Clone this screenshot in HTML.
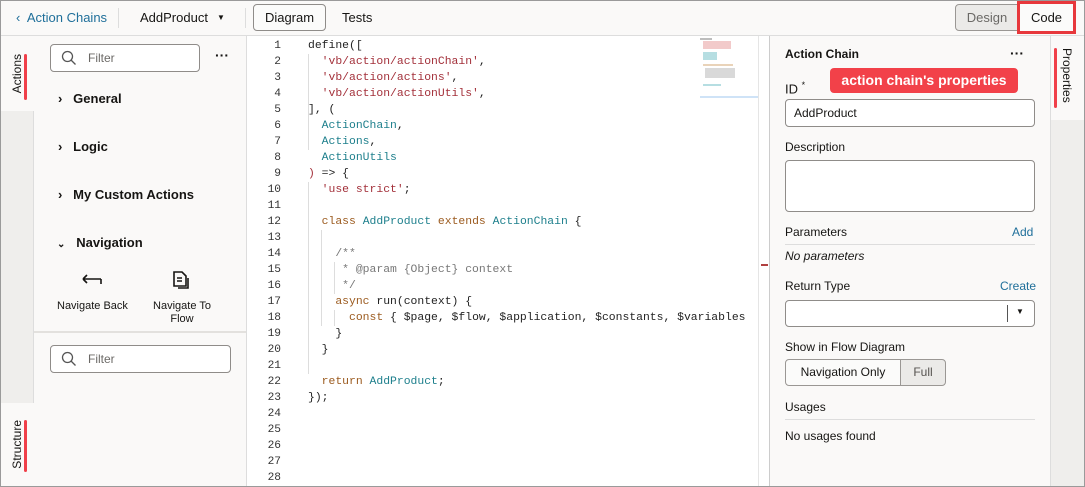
<!DOCTYPE html>
<html><head><meta charset="utf-8"><style>
*{box-sizing:border-box;margin:0;padding:0}
body{width:1085px;height:487px;overflow:hidden;background:#fff;font-family:"Liberation Sans",sans-serif;color:#161513;font-size:12px;position:relative}
.a{position:absolute}
.frame{left:0;top:0;width:1085px;height:487px;border:1px solid #9a9a9a;pointer-events:none;z-index:10}
.top{left:0;top:0;width:1085px;height:36px;background:#faf9f8;border-bottom:1px solid #ddd}
.code{font-family:"Liberation Mono",monospace;font-size:11.4px;line-height:16px;white-space:pre}
.ln{left:250px;width:31px;text-align:right;color:#333;font-size:11.2px}
.k{color:#9b5a1e}.t{color:#1d7f8c}.s{color:#a3303a}.c{color:#777}.p{color:#222}
.lbl{font-size:12px;color:#161513}
.inp{background:#fff;border:1px solid #8f8c89;border-radius:4px}
.vt{writing-mode:vertical-rl;font-size:12px}
</style></head><body>
<div class="a top"></div>
<div class="a" style="left:16px;top:10px;color:#1f6f9a;font-size:13px">‹&nbsp; Action Chains</div>
<div class="a" style="left:118px;top:8px;width:1px;height:20px;background:#ddd"></div>
<div class="a" style="left:140px;top:10px;font-size:13px">AddProduct</div>
<div class="a" style="left:217px;top:13px;font-size:8px">▼</div>
<div class="a" style="left:245px;top:8px;width:1px;height:20px;background:#ddd"></div>
<div class="a" style="left:253px;top:4px;width:73px;height:27px;border:1px solid #8f8c89;border-radius:4px;background:#fbfbfa;font-size:13px;text-align:center;line-height:25px">Diagram</div>
<div class="a" style="left:342px;top:10px;font-size:13px">Tests</div>
<div class="a" style="left:955px;top:4px;width:64px;height:27px;border:1px solid #9a9794;border-radius:4px 0 0 4px;background:#ebeae8;color:#6b6966;font-size:13px;text-align:center;line-height:25px">Design</div>
<div class="a" style="left:1017px;top:1px;width:59px;height:33px;border:3px solid #e7383c;background:#fbfbfa;font-size:13px;text-align:center;line-height:27px">Code</div>

<!-- left strip -->
<div class="a" style="left:0;top:36px;width:34px;height:451px;background:#efeeec;border-right:1px solid #ddd"></div>
<div class="a" style="left:0;top:36px;width:34px;height:75px;background:#faf9f8"></div>
<div class="a vt" style="left:10px;top:54px;transform:rotate(180deg)">Actions</div>
<div class="a" style="left:24px;top:54px;width:3px;height:46px;background:#f0404a;border-radius:2px"></div>
<div class="a" style="left:0;top:403px;width:34px;height:84px;background:#faf9f8"></div>
<div class="a vt" style="left:10px;top:420px;transform:rotate(180deg)">Structure</div>
<div class="a" style="left:24px;top:420px;width:3px;height:52px;background:#f0404a;border-radius:2px"></div>

<!-- left panel -->
<div class="a" style="left:34px;top:36px;width:213px;height:451px;background:#faf9f8;border-right:1px solid #ddd"></div>
<div class="a inp" style="left:50px;top:44px;width:150px;height:28px"></div>
<svg class="a" style="left:61px;top:50px" width="16" height="16"><circle cx="6.5" cy="6.5" r="5" fill="none" stroke="#555" stroke-width="1.3"/><path d="M10 10l4.5 4.5" stroke="#555" stroke-width="1.3"/></svg>
<div class="a" style="left:88px;top:51px;color:#6b6966">Filter</div>
<div class="a" style="left:215px;top:47px;font-weight:bold;font-size:14px">···</div>
<div class="a" style="left:58px;top:91px;font-weight:bold;font-size:13px">›&nbsp;&nbsp; General</div>
<div class="a" style="left:58px;top:139px;font-weight:bold;font-size:13px">›&nbsp;&nbsp; Logic</div>
<div class="a" style="left:58px;top:187px;font-weight:bold;font-size:13px">›&nbsp;&nbsp; My Custom Actions</div>
<div class="a" style="left:57px;top:235px;font-weight:bold;font-size:13px"><span style="font-size:10px">⌄</span>&nbsp;&nbsp; Navigation</div>
<svg class="a" style="left:81px;top:272px" width="22" height="14"><path d="M2 7h18M2 7l4-4M2 7l4 4M20 7v5" fill="none" stroke="#161513" stroke-width="1.6"/></svg>
<svg class="a" style="left:171px;top:270px" width="20" height="20"><path d="M3 2h8l4 4v10H3z" fill="none" stroke="#161513" stroke-width="1.6"/><path d="M6 8h5M6 11h5" stroke="#161513" stroke-width="1.5"/><path d="M17 8v10H7" fill="none" stroke="#161513" stroke-width="1.6"/></svg>
<div class="a" style="left:57px;top:300px;font-size:11px">Navigate Back</div>
<div class="a" style="left:152px;top:300px;font-size:11px;text-align:center;width:60px;line-height:13px">Navigate To Flow</div>
<div class="a" style="left:34px;top:331px;width:212px;height:2px;background:#e3e1de"></div>
<div class="a inp" style="left:50px;top:345px;width:181px;height:28px"></div>
<svg class="a" style="left:61px;top:351px" width="16" height="16"><circle cx="6.5" cy="6.5" r="5" fill="none" stroke="#555" stroke-width="1.3"/><path d="M10 10l4.5 4.5" stroke="#555" stroke-width="1.3"/></svg>
<div class="a" style="left:88px;top:352px;color:#6b6966">Filter</div>

<!-- editor -->
<div class="a code ln" style="top:38px">1
2
3
4
5
6
7
8
9
10
11
12
13
14
15
16
17
18
19
20
21
22
23
24
25
26
27
28</div>
<div class="a" style="left:308px;top:54px;width:1px;height:48px;background:#ddd"></div>
<div class="a" style="left:308px;top:102px;width:1px;height:48px;background:#ddd"></div>
<div class="a" style="left:308px;top:182px;width:1px;height:192px;background:#ddd"></div>
<div class="a" style="left:321px;top:230px;width:1px;height:96px;background:#ddd"></div>
<div class="a" style="left:334px;top:262px;width:1px;height:32px;background:#ddd"></div>
<div class="a" style="left:334px;top:310px;width:1px;height:16px;background:#ddd"></div>
<div class="a code p" style="left:308px;top:38px">define([
  <span class="s">'vb/action/actionChain'</span>,
  <span class="s">'vb/action/actions'</span>,
  <span class="s">'vb/action/actionUtils'</span>,
], (
  <span class="t">ActionChain</span>,
  <span class="t">Actions</span>,
  <span class="t">ActionUtils</span>
<span class="s">)</span> =&gt; {
  <span class="s">'use strict'</span>;

  <span class="k">class</span> <span class="t">AddProduct</span> <span class="k">extends</span> <span class="t">ActionChain</span> {

    <span class="c">/**</span>
<span class="c">     * @param {Object} context</span>
<span class="c">     */</span>
    <span class="k">async</span> run(context) {
      <span class="k">const</span> { $page, $flow, $application, $constants, $variables
    }
  }

  <span class="k">return</span> <span class="t">AddProduct</span>;
});</div>
<!-- minimap -->
<div class="a" style="left:700px;top:38px;width:58px;height:60px;opacity:.55">
<div class="a" style="left:0;top:0;width:12px;height:2px;background:#888"></div>
<div class="a" style="left:3px;top:3px;width:28px;height:8px;background:#e8a0a0"></div>
<div class="a" style="left:3px;top:14px;width:14px;height:8px;background:#7cc4cc"></div>
<div class="a" style="left:3px;top:26px;width:30px;height:2px;background:#d8b080"></div>
<div class="a" style="left:5px;top:30px;width:30px;height:10px;background:#bbb"></div>
<div class="a" style="left:3px;top:46px;width:18px;height:2px;background:#7cc4cc"></div>
</div>
<div class="a" style="left:700px;top:96px;width:58px;height:2px;background:#cfe3f7"></div>
<div class="a" style="left:758px;top:36px;width:1px;height:451px;background:#e5e5e5"></div>
<div class="a" style="left:761px;top:264px;width:7px;height:2px;background:#b04040"></div>

<!-- right panel -->
<div class="a" style="left:769px;top:36px;width:282px;height:451px;background:#faf9f8;border-left:1px solid #ccc;border-right:1px solid #ddd"></div>
<div class="a" style="left:785px;top:47px;font-weight:bold;font-size:12px">Action Chain</div>
<div class="a" style="left:1010px;top:45px;font-weight:bold;font-size:14px">···</div>
<div class="a" style="left:785px;top:80px;font-size:13px">ID <sup style="font-size:9px">*</sup></div>
<div class="a" style="left:830px;top:68px;width:188px;height:25px;background:#f24149;border-radius:4px;color:#fff;font-weight:bold;font-size:14px;line-height:25px;text-align:center">action chain's properties</div>
<div class="a inp" style="left:785px;top:99px;width:250px;height:28px;padding:6px 8px;font-size:12px">AddProduct</div>
<div class="a lbl" style="left:785px;top:140px">Description</div>
<div class="a inp" style="left:785px;top:160px;width:250px;height:52px"></div>
<div class="a lbl" style="left:785px;top:225px">Parameters</div>
<div class="a" style="left:1012px;top:225px;color:#1f6f9a">Add</div>
<div class="a" style="left:785px;top:244px;width:250px;height:1px;background:#ddd"></div>
<div class="a" style="left:785px;top:249px;font-style:italic">No parameters</div>
<div class="a lbl" style="left:785px;top:279px">Return Type</div>
<div class="a" style="left:1000px;top:279px;color:#1f6f9a">Create</div>
<div class="a inp" style="left:785px;top:300px;width:250px;height:27px"></div>
<div class="a" style="left:1007px;top:305px;width:1px;height:17px;background:#555"></div>
<div class="a" style="left:1016px;top:307px;font-size:8px">▼</div>
<div class="a lbl" style="left:785px;top:340px">Show in Flow Diagram</div>
<div class="a" style="left:785px;top:359px;width:116px;height:27px;border:1px solid #9a9794;border-radius:4px 0 0 4px;background:#fbfbfa;text-align:center;line-height:25px">Navigation Only</div>
<div class="a" style="left:900px;top:359px;width:46px;height:27px;border:1px solid #9a9794;border-radius:0 4px 4px 0;background:#ebeae8;color:#55524f;text-align:center;line-height:25px">Full</div>
<div class="a lbl" style="left:785px;top:400px">Usages</div>
<div class="a" style="left:785px;top:419px;width:250px;height:1px;background:#ddd"></div>
<div class="a" style="left:785px;top:429px">No usages found</div>

<!-- right strip -->
<div class="a" style="left:1051px;top:36px;width:34px;height:451px;background:#efeeec"></div>
<div class="a" style="left:1051px;top:36px;width:34px;height:84px;background:#faf9f8"></div>
<div class="a vt" style="left:1060px;top:48px">Properties</div>
<div class="a" style="left:1054px;top:48px;width:3px;height:60px;background:#f0404a;border-radius:2px"></div>
<div class="a frame"></div>
</body></html>
